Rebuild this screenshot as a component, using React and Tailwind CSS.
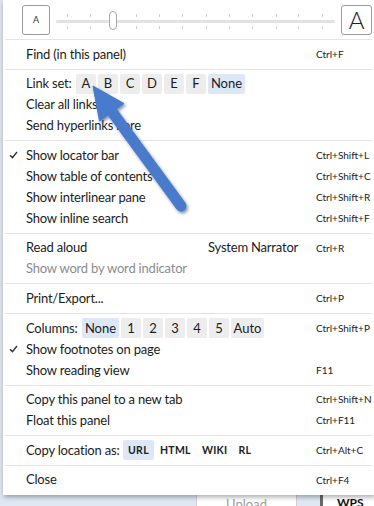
const font = { fontFamily: "Lato, 'Open Sans', sans-serif" };

const Check = () => (
  <svg width="9" height="8" viewBox="0 0 9 8" className="ml-[6px]">
    <path d="M1 4.2 L3.4 6.6 L8 1" fill="none" stroke="#333" strokeWidth="1.4" />
  </svg>
);

const Row = ({ checked, children, shortcut, muted }) => (
  <div className="flex items-center h-[21px]">
    <div className="w-[23px] shrink-0 flex items-center">{checked && <Check />}</div>
    <div className={`flex-1 flex items-center text-[13px] tracking-[-0.2px] ${muted ? "text-[#8c8c8c]" : "text-[#1c1c1c]"}`}>
      {children}
    </div>
    <div className="w-[58px] shrink-0 text-[10px] text-[#222]">{shortcut}</div>
  </div>
);

const Section = ({ children }) => (
  <>
    <div className="mx-[2px] h-px bg-[#e4e4e4]" />
    <div className="py-[3.8px]">{children}</div>
  </>
);

const Chip = ({ children, active, w }) => (
  <span
    className={`h-[20px] flex items-center justify-center rounded-[2px] ${w} ${active ? "bg-[#dce8f7]" : "bg-[#ededed]"}`}
  >
    {children}
  </span>
);

const Slider = () => {
  const ticks = [68, 91, 114, 137, 160, 183, 207, 230, 253, 277, 299, 323];
  return (
    <div className="relative flex-1 h-[30px] mx-[5px]">
      <div className="absolute left-[1px] right-[1px] top-[15px] h-[3px] bg-[#e2e2e2] rounded-full" />
      {ticks.map((t) => (
        <div key={t}>
          <div className="absolute w-px h-[3px] bg-[#cfcfcf] top-[9px]" style={{ left: t - 56 }} />
          <div className="absolute w-px h-[3px] bg-[#cfcfcf] top-[21px]" style={{ left: t - 56 }} />
        </div>
      ))}
      <div className="absolute left-[54px] top-[6px] w-[8px] h-[19px] rounded-full bg-white border border-[#a8a8a8]" />
    </div>
  );
};

const Arrow = () => (
  <svg className="absolute left-0 top-0 z-20 pointer-events-none" width="374" height="506">
    <defs>
      <filter id="sh" x="-20%" y="-20%" width="140%" height="140%">
        <feDropShadow dx="1.5" dy="2" stdDeviation="1.6" floodColor="#1e3a6a" floodOpacity="0.55" />
      </filter>
    </defs>
    <g filter="url(#sh)" fill="#4a7acb" stroke="#4a7acb">
      <line x1="110" y1="109" x2="181" y2="206" strokeWidth="11" strokeLinecap="round" />
      <polygon points="93,86 99.5,121 124,103.5" strokeWidth="1" strokeLinejoin="round" />
    </g>
  </svg>
);

export default function App() {
  return (
    <div className="relative w-[374px] h-[506px] bg-[#dfe6ee] overflow-hidden flex flex-col" style={font}>
      <div className="ml-[3px] w-[371px] h-[495px] shrink-0 bg-white shadow-[1px_2px_5px_rgba(0,0,0,0.35)] z-10">
        <div className="h-[39px] flex items-center pl-[19px] pr-[2px]">
          <div className="w-[28px] h-[30px] border border-[#9a9a9a] rounded-[3px] flex items-center justify-center text-[9px] text-[#333]">
            A
          </div>
          <Slider />
          <div className="w-[31px] h-[30px] border border-[#9a9a9a] rounded-[3px] flex items-center justify-center text-[24px] font-light text-[#222]">
            A
          </div>
        </div>

        <Section>
          <Row shortcut="Ctrl+F">Find (in this panel)</Row>
        </Section>

        <Section>
          <Row>
            <span className="w-[50px]">Link set:</span>
            <div className="flex gap-[2px] tracking-normal">
              <Chip w="w-[20px]">A</Chip>
              <Chip w="w-[20px]">B</Chip>
              <Chip w="w-[20px]">C</Chip>
              <Chip w="w-[20px]">D</Chip>
              <Chip w="w-[20px]">E</Chip>
              <Chip w="w-[20px]">F</Chip>
              <Chip w="w-[37px]" active>None</Chip>
            </div>
          </Row>
          <Row>Clear all links</Row>
          <Row>Send hyperlinks here</Row>
        </Section>

        <Section>
          <Row checked shortcut="Ctrl+Shift+L">Show locator bar</Row>
          <Row shortcut="Ctrl+Shift+C">Show table of contents</Row>
          <Row shortcut="Ctrl+Shift+R">Show interlinear pane</Row>
          <Row shortcut="Ctrl+Shift+F">Show inline search</Row>
        </Section>

        <Section>
          <Row shortcut="Ctrl+R">
            <span className="w-[182px]">Read aloud</span>
            <span>System Narrator</span>
          </Row>
          <Row muted>Show word by word indicator</Row>
        </Section>

        <Section>
          <Row shortcut="Ctrl+P">Print/Export...</Row>
        </Section>

        <Section>
          <Row shortcut="Ctrl+Shift+P">
            <span className="w-[56px]">Columns:</span>
            <div className="flex gap-[2px] tracking-normal">
              <Chip w="w-[37px]" active>None</Chip>
              <Chip w="w-[20px]">1</Chip>
              <Chip w="w-[20px]">2</Chip>
              <Chip w="w-[20px]">3</Chip>
              <Chip w="w-[20px]">4</Chip>
              <Chip w="w-[20px]">5</Chip>
              <Chip w="w-[33px]">Auto</Chip>
            </div>
          </Row>
          <Row checked>Show footnotes on page</Row>
          <Row shortcut="F11">Show reading view</Row>
        </Section>

        <Section>
          <Row shortcut="Ctrl+Shift+N">Copy this panel to a new tab</Row>
          <Row shortcut="Ctrl+F11">Float this panel</Row>
        </Section>

        <Section>
          <Row shortcut="Ctrl+Alt+C">
            <span className="w-[97px]">Copy location as:</span>
            <div className="flex gap-[1px] text-[10.5px] font-bold tracking-[0.3px] text-[#222]">
              <span className="h-[20px] px-[5px] flex items-center rounded-[2px] bg-[#dce8f7]">URL</span>
              <span className="h-[20px] px-[5px] flex items-center">HTML</span>
              <span className="h-[20px] px-[5px] flex items-center">WIKI</span>
              <span className="h-[20px] px-[5px] flex items-center">RL</span>
            </div>
          </Row>
        </Section>

        <Section>
          <Row shortcut="Ctrl+F4">Close</Row>
        </Section>
      </div>

      <div className="flex flex-1 bg-[#dfe8f4]">
        <div className="w-[196px]" />
        <div className="w-[101px] bg-white border-x border-[#d0d0d0] flex justify-center text-[13px] text-[#a0a0a0] leading-[18px]">
          Upload
        </div>
        <div className="w-[23px]" />
        <div className="w-[3px] bg-[#6a6a6a]" />
        <div className="flex-1 bg-white pl-[14px] text-[12px] font-bold text-[#111] leading-[16px]">WPS</div>
      </div>

      <Arrow />
    </div>
  );
}
